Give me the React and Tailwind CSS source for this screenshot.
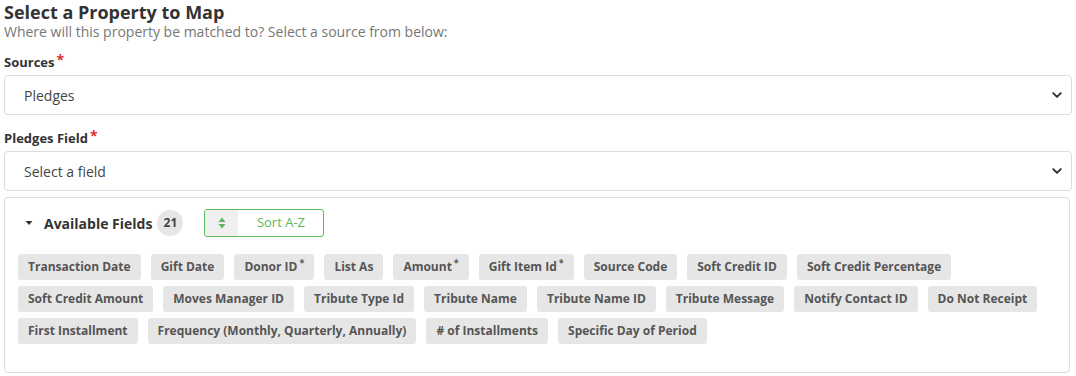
import React from "react";

const fields = [
  ["Transaction Date"], ["Gift Date"], ["Donor ID", true], ["List As"], ["Amount", true], ["Gift Item Id", true],
  ["Source Code"], ["Soft Credit ID"], ["Soft Credit Percentage"], ["Soft Credit Amount"], ["Moves Manager ID"],
  ["Tribute Type Id"], ["Tribute Name"], ["Tribute Name ID"], ["Tribute Message"], ["Notify Contact ID"],
  ["Do Not Receipt"], ["First Installment"], ["Frequency (Monthly, Quarterly, Annually)"], ["# of Installments"],
  ["Specific Day of Period"],
];

function Chevron() {
  return (
    <svg width="12" height="12" viewBox="0 0 16 16" className="text-[#333]">
      <path d="M3 5.5 L8 10.5 L13 5.5" fill="none" stroke="currentColor" strokeWidth="2.6" strokeLinecap="round" strokeLinejoin="round" />
    </svg>
  );
}

function Select({ value }) {
  return (
    <div className="mx-[4px] h-[40px] flex items-center justify-between border border-[#dcdcdc] rounded-[4px] pl-[19px] pr-[8px] text-[14px] text-[#444] bg-white">
      <span>{value}</span>
      <Chevron />
    </div>
  );
}

function Label({ children }) {
  return (
    <div className="px-[4px] text-[13px] font-bold text-[#333] flex items-start leading-[18px]">
      {children}
      <span className="text-[#e03030] text-[14px] ml-[2px] leading-[14px]">*</span>
    </div>
  );
}

export default function App() {
  return (
    <div className="w-[1076px] h-[376px] bg-white overflow-hidden" style={{ fontFamily: '"Open Sans", sans-serif' }}>
      <div className="px-[4px] pt-[0px] text-[18px] font-bold text-[#333] leading-[24px]">Select a Property to Map</div>
      <div className="px-[4px] text-[14px] text-[#777] leading-[16px]">Where will this property be matched to? Select a source from below:</div>
      <div className="mt-[13px]"><Label>Sources</Label></div>
      <div className="mt-[4px]"><Select value="Pledges" /></div>
      <div className="mt-[14px]"><Label>Pledges Field</Label></div>
      <div className="mt-[4px]"><Select value="Select a field" /></div>
      <div className="mx-[4px] mt-[6px] w-[1066px] h-[176px] border border-[#dcdcdc] rounded-[4px]">
        <div className="flex items-center h-[26px] mt-[12px] pl-[20px]">
          <svg width="8" height="8" viewBox="0 0 8 8" className="mr-[11px]">
            <path d="M0.5 2 L7.5 2 L4 6 Z" fill="#333" />
          </svg>
          <span className="text-[14px] font-bold text-[#333]">Available Fields</span>
          <span className="ml-[5px] w-[26px] h-[26px] rounded-full bg-[#e6e6e6] text-[12px] font-bold text-[#444] flex items-center justify-center">21</span>
          <div className="ml-[21px] flex h-[28px] w-[120px] border border-[#5cb85c] rounded-[3px] overflow-hidden">
            <div className="w-[33px] bg-[#f0f0f0] flex items-center justify-center">
              <svg width="8" height="12" viewBox="0 0 8 12">
                <path d="M4 0.5 L7.5 5 L0.5 5 Z" fill="#5cb85c" />
                <path d="M4 11.5 L7.5 7 L0.5 7 Z" fill="#5cb85c" />
              </svg>
            </div>
            <div className="flex-1 flex items-center justify-center text-[13px] text-[#5cb85c]">Sort A-Z</div>
          </div>
        </div>
        <div className="flex flex-wrap gap-x-[10px] gap-y-[6px] px-[13px] mt-[18px]">
          {fields.map(([name, req]) => (
            <span key={name} className="h-[26px] px-[10px] rounded-[3px] bg-[#e6e6e6] text-[12px] font-bold text-[#555] flex items-center">
              {name}
              {req && <span className="text-[9px] ml-[2px] -mt-[9px]">*</span>}
            </span>
          ))}
        </div>
      </div>
    </div>
  );
}
